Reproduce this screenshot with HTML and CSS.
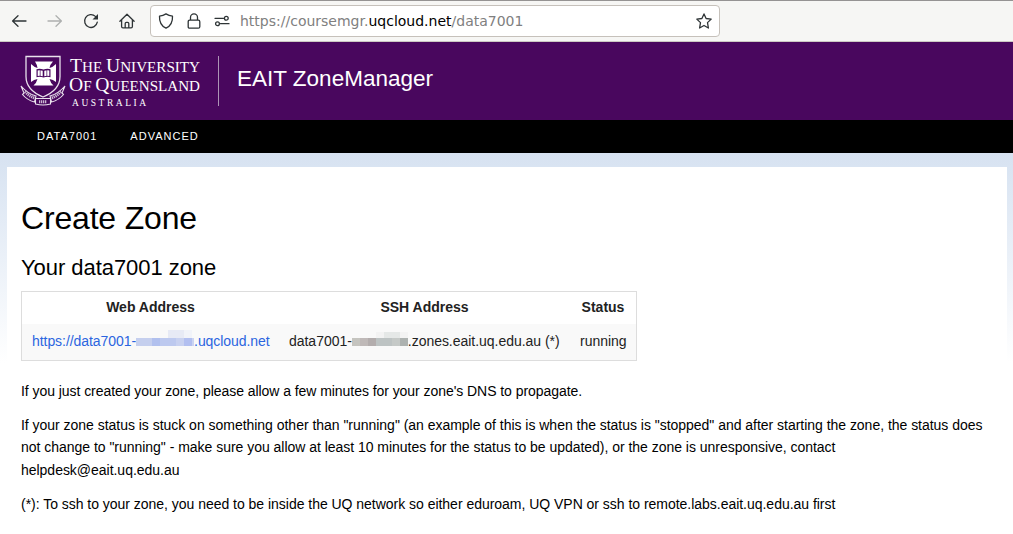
FILE: index.html
```html
<!DOCTYPE html>
<html lang="en">
<head>
<meta charset="utf-8">
<title>EAIT ZoneManager</title>
<link rel="stylesheet" href="styles.css">
</head>
<body>
<div class="toolbar">
  <div class="nav-buttons">
    <svg class="icon" viewBox="0 0 16 16"><path d="M15 8H1.800M7 2.800 1.600 8 7 13.200"/></svg>
    <svg class="icon disabled" viewBox="0 0 16 16"><path d="M1 8h13.200M9 2.800 14.400 8 9 13.200"/></svg>
    <svg class="icon" viewBox="0 0 16 16"><path d="M14.300 9.200A6.400 6.400 0 1 1 12.400 3.400L14 5"/><path class="solid" d="M15 1v5.500H9.500z"/></svg>
    <svg class="icon" viewBox="0 0 16 16"><path d="M.9 8.200 8 1.200l7.100 7M2.600 7v6.600q0 1.300 1.300 1.300h8.200q1.300 0 1.300-1.300V7M6.200 14.700v-4.200q0-1.200 1.200-1.200h1.200q1.200 0 1.200 1.200v4.200"/></svg>
  </div>
  <div class="urlbar">
    <svg class="icon" viewBox="0 0 16 16"><path d="M8 .9c2 1.300 4 2 6.500 2.300C14.800 9 12.500 13 8 15.200 3.500 13 1.200 9 1.500 3.200 4 2.900 6 2.200 8 .9z"/></svg>
    <svg class="icon" viewBox="0 0 16 16"><path d="M4.500 7V4.400a3.500 3.500 0 0 1 7 0V7M3.700 7.200h8.600q1.500 0 1.500 1.500v5q0 1.500-1.500 1.500H3.700q-1.500 0-1.500-1.500v-5q0-1.500 1.500-1.500z"/></svg>
    <svg class="icon" viewBox="0 0 16 16"><path d="M1 5.300h8.500M6.500 10.700H15"/><circle cx="12.300" cy="5.300" r="1.900"/><circle cx="3.500" cy="10.700" r="1.900"/></svg>
    <span class="url">https://coursemgr.<b>uqcloud.net</b>/data7001</span>
    <svg class="icon star" viewBox="0 0 16 16"><path d="M8 .9l2.100 4.600 5.100.6-3.700 3.500.9 5.400L8 12.500 3.600 15l.9-5.400L.8 6.100l5.100-.6z"/></svg>
  </div>
</div>
<header class="banner">
  <svg class="logo" viewBox="0 0 182 54" role="img" aria-label="The University of Queensland Australia">
    <path class="line" d="M6 2.500h34v20c0 9-6 16-17 20.500C12 38.500 6 31.500 6 22.500z"/>
    <path class="white" d="M15 7.500h18q-3 3-3.500 6.500Q33 13 36 10v18q-3-2.500-6.500-3 1 4 4 6.500H13.500q3-2.500 4-6.500-3.500.5-6.500 3V10q3 3 6.500 4Q17 10.500 15 7.500z"/>
    <path class="purple" d="M16.500 15.200q3.500-1 7 .4 3.500-1.400 7-.4v8q-3.500-1-7 .4-3.500-1.400-7-.4z"/>
    <path class="white" d="M17.700 16.400q2.600-.5 5 .4v5.500q-2.400-.8-5-.3zM24.300 16.800q2.600-.9 5-.4V22q-2.400-.5-5 .3z"/>
    <path class="detail" d="M20.200 16v7M26.800 16v7"/>
    <path class="ribbon" d="M1 32q7 8 15 10l-1.500 6Q7 46 2.500 40.500L4 39zM45 32q-7 8-15 10l1.500 6Q39 46 43.500 40.500L42 39z"/>
    <path class="ribbon" d="M15.500 44.500h15v5.500q-7.500 2-15 0z"/>
    <path class="motto" d="M5 37.500q4 4.500 9.500 6.500M41 37.500q-4 4.500-9.500 6.500M19 47.700h8"/>
    <g class="wordmark">
      <text x="50" y="17.500" textLength="130" lengthAdjust="spacingAndGlyphs"><tspan class="cap">T</tspan>HE <tspan class="cap">U</tspan>NIVERSITY</text>
      <text x="49" y="36.500" textLength="131" lengthAdjust="spacingAndGlyphs"><tspan class="cap">O</tspan>F <tspan class="cap">Q</tspan>UEENSLAND</text>
      <text class="country" x="52" y="51.500" textLength="74">AUSTRALIA</text>
    </g>
  </svg>
  <div class="site-title">EAIT ZoneManager</div>
</header>
<nav class="menu"><a>DATA7001</a><a>ADVANCED</a></nav>
<div class="page">
  <main class="content">
    <h1>Create Zone</h1>
    <h2>Your data7001 zone</h2>
    <table class="zones">
      <thead><tr><th class="web">Web Address</th><th class="ssh">SSH Address</th><th class="status">Status</th></tr></thead>
      <tbody><tr>
        <td class="link">https://data7001-<svg class="mosaic" viewBox="0 0 58 16" shape-rendering="crispEdges"><path fill="#e7eaf5" d="M32 0h16v8H32z"/><path fill="#f1f3f9" d="M48 0h8v8h-8z"/><path fill="#c5cfee" d="M0 8h16v8H0z"/><path fill="#b1c0ee" d="M16 8h8v8h-8z"/><path fill="#bdc9ef" d="M24 8h16v8H24z"/><path fill="#c8d1f0" d="M40 8h8v8h-8z"/><path fill="#b2bff0" d="M48 8h8v8h-8z"/><path fill="#cbd4f2" d="M56 8h2v8h-2z"/></svg>.uqcloud.net</td>
        <td>data7001-<svg class="mosaic gray" viewBox="0 0 56 14" shape-rendering="crispEdges"><path fill="#f3f3f3" d="M24 0h8v6h-8zM48 0h8v6h-8z"/><path fill="#e5e8e7" d="M32 0h16v6H32z"/><path fill="#c5c4bf" d="M0 6h8v8H0z"/><path fill="#bfb9b8" d="M8 6h8v8H8z"/><path fill="#b3adad" d="M16 6h8v8h-8z"/><path fill="#bdc3c3" d="M24 6h16v8H24z"/><path fill="#c5c9c7" d="M40 6h8v8h-8z"/><path fill="#adb2b0" d="M48 6h8v8h-8z"/></svg>.zones.eait.uq.edu.au (*)</td>
        <td>running</td>
      </tr></tbody>
    </table>
    <p class="notice">If you just created your zone, please allow a few minutes for your zone's DNS to propagate.</p>
    <p>If your zone status is stuck on something other than "running" (an example of this is when the status is "stopped" and after starting the zone, the status does not change to "running" - make sure you allow at least 10 minutes for the status to be updated), or the zone is unresponsive, contact helpdesk@eait.uq.edu.au</p>
    <p>(*): To ssh to your zone, you need to be inside the UQ network so either eduroam, UQ VPN or ssh to remote.labs.eait.uq.edu.au first</p>
  </main>
</div>
</body>
</html>
```
FILE: styles.css
```css
* { box-sizing: border-box; }
body { margin: 0; height: 534px; overflow: hidden; background: #fff; color: #000; font: 14px/22.4px "Liberation Sans", Arial, sans-serif; }
.toolbar { height: 42px; border-top: 1px solid #959393; border-bottom: 1px solid #ccc9c3; background: #f6f6f4; display: flex; padding: 4px 0 4px 11px; }
.nav-buttons { width: 139px; display: flex; gap: 20px; align-items: center; }
.icon { width: 16px; height: 16px; flex: none; fill: none; stroke: #2e3436; stroke-width: 1.3; stroke-linecap: round; stroke-linejoin: round; }
.disabled { stroke: #aeb0af; }
.solid { fill: #2e3436; stroke: none; }
.urlbar { width: 570px; height: 32px; border: 1px solid #c6c1bb; border-radius: 4px; background: #fff; display: flex; align-items: center; gap: 12px; padding: 0 7px; }
.url { margin-left: -2px; font: 14px/20px "DejaVu Sans", sans-serif; color: #808080; white-space: nowrap; }
.url b { font-weight: 400; color: #000; }
.star { margin-left: auto; }
.banner { height: 78px; background: #49075e; display: flex; align-items: center; padding-left: 20px; }
.logo { width: 182px; height: 54px; flex: none; }
.line { fill: none; stroke: #e9e1ec; stroke-width: 1.3; }
.white { fill: #fff; }
.purple { fill: #49075e; }
.detail { stroke: #49075e; stroke-width: .7; }
.ribbon { fill: #49075e; stroke: #e9e1ec; stroke-width: 1.1; }
.motto { fill: none; stroke: #cbb9d1; stroke-width: 3; stroke-dasharray: 1.3 .7; }
.wordmark { font: 15px "Liberation Serif", serif; fill: #fff; }
.cap { font-size: 19.5px; }
.country { font-size: 9.5px; }
.site-title { height: 50px; margin-left: 16px; padding-left: 18px; border-left: 1px solid #ad94b6; color: #fff; font-size: 22.5px; line-height: 46px; }
.menu { height: 33px; background: #000; color: #fff; display: flex; gap: 33px; padding-left: 37px; font-size: 11px; line-height: 32px; letter-spacing: 1.02px; }
.page { height: 381px; padding: 14px 6px 0 7px; background: linear-gradient(#d7e2f1 0, #d9e4f2 14px, #fff 210px); }
.content { height: 367px; background: #fff; padding: 31px 14px 0; }
h1, h2 { margin: 0; font-weight: 400; }
h1 { font-size: 32px; line-height: 40px; letter-spacing: -.18px; }
h2 { margin-top: 15px; font-size: 22px; line-height: 30px; letter-spacing: -.05px; }
.zones { width: 616px; height: 70px; margin: 8px 0 19px; border: 1px solid #ddd; border-collapse: separate; border-spacing: 0; table-layout: fixed; color: #222; white-space: nowrap; }
th, td { padding: 0 10px; text-align: left; letter-spacing: -.03px; }
th { height: 32px; padding: 0 0 2px; text-align: center; letter-spacing: 0; }
.web { width: 257px; }
.ssh { width: 291px; }
.status { width: 66px; }
td { height: 36px; padding-bottom: 2px; background: #f9f9f9; }
.link { color: #2b65e0; letter-spacing: -.06px; }
.mosaic { width: 58px; height: 16px; vertical-align: 0; }
.gray { width: 56px; height: 14px; }
p { margin: 0 0 11.6px; letter-spacing: -.025px; }
.notice { letter-spacing: -.055px; }
```
